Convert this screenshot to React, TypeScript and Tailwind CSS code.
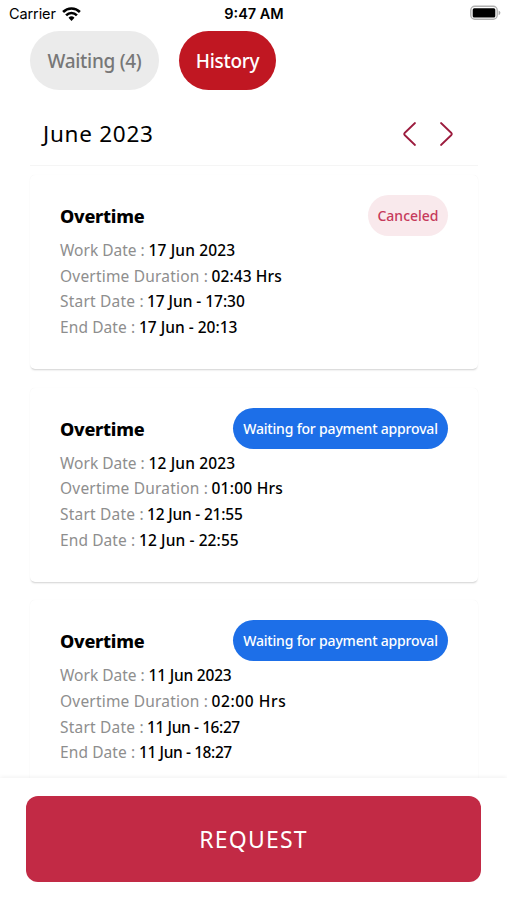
import { clsx } from "clsx";

type Status = "canceled" | "payment";

interface Detail {
  label: string;
  value: string;
  spacing: string;
}

interface OvertimeItem {
  id: number;
  status: Status;
  details: Detail[];
}

const items: OvertimeItem[] = [
  {
    id: 1,
    status: "canceled",
    details: [
      { label: "Work Date :", value: "17 Jun 2023", spacing: "tracking-[0.14px]" },
      { label: "Overtime Duration :", value: "02:43 Hrs", spacing: "tracking-[0.1px]" },
      { label: "Start Date :", value: "17 Jun - 17:30", spacing: "tracking-[-0.05px]" },
      { label: "End Date :", value: "17 Jun - 20:13", spacing: "tracking-normal" },
    ],
  },
  {
    id: 2,
    status: "payment",
    details: [
      { label: "Work Date :", value: "12 Jun 2023", spacing: "tracking-[0.14px]" },
      { label: "Overtime Duration :", value: "01:00 Hrs", spacing: "tracking-[0.25px]" },
      { label: "Start Date :", value: "12 Jun - 21:55", spacing: "tracking-[-0.2px]" },
      { label: "End Date :", value: "12 Jun - 22:55", spacing: "tracking-[0.1px]" },
    ],
  },
  {
    id: 3,
    status: "payment",
    details: [
      { label: "Work Date :", value: "11 Jun 2023", spacing: "tracking-[-0.2px]" },
      { label: "Overtime Duration :", value: "02:00 Hrs", spacing: "tracking-[0.6px]" },
      { label: "Start Date :", value: "11 Jun - 16:27", spacing: "tracking-[-0.4px]" },
      { label: "End Date :", value: "11 Jun - 18:27", spacing: "tracking-[-0.4px]" },
    ],
  },
];

// Every label has a fixed width so the values start at the same place in each card
const labelClass: Record<string, string> = {
  "Work Date :": "w-[88.5px]",
  "Overtime Duration :": "w-[151.5px] tracking-[0.2px]",
  "Start Date :": "w-[87px] tracking-[0.2px]",
  "End Date :": "w-[79px] tracking-[0.1px]",
};

function StatusBar() {
  return (
    <div className="grid h-[31px] shrink-0 grid-cols-3 items-start pt-[5px] pr-[6px] pl-[9px] font-['Inter',sans-serif] text-[14.5px] leading-[18px] text-black">
      <div className="flex items-center gap-[6px]">
        <span className="tracking-[-0.1px]">Carrier</span>
        <svg width="19" height="14" viewBox="0 0 19 14" fill="none" stroke="#000" strokeWidth="2.6">
          <path d="M1.1 5a12 12 0 0 1 16.8 0" />
          <path d="M4.1 8.3a7.6 7.6 0 0 1 10.800 0" />
          <path d="M9.5 14l-3-3.200a4.300 4.300 0 0 1 6 0z" fill="#000" stroke="none" />
        </svg>
      </div>
      <span className="-ml-[2px] text-center font-semibold whitespace-nowrap">9:47 AM</span>
      <svg className="justify-self-end" width="31" height="16" viewBox="0 0 31 16">
        <rect x="0.8" y="1.3" width="26.4" height="13" rx="4" fill="#fff" stroke="#b0b0b0" strokeWidth="1.4" />
        <rect x="2.7" y="3.2" width="22.6" height="9.2" rx="1.5" fill="#000" />
        <path d="M28.6 5.4q1.8 .8 1.8 2.4t-1.8 2.4z" fill="#a8a8a8" />
      </svg>
    </div>
  );
}

function Badge({ status }: { status: Status }) {
  return (
    <div
      className={clsx(
        "flex h-[41px] shrink-0 items-center justify-center rounded-full text-[14px] font-medium whitespace-nowrap",
        status === "canceled"
          ? "w-[80px] bg-[#f9e9ec] text-[#c63a5b]"
          : "w-[215px] bg-[#1d6fe8] tracking-[-0.18px] text-white"
      )}
    >
      {status === "canceled" ? "Canceled" : "Waiting for payment approval"}
    </div>
  );
}

function OvertimeCard({ item }: { item: OvertimeItem }) {
  return (
    <div className="h-[194px] shrink-0 rounded-[5px] bg-white px-[30px] pt-[20px] shadow-[0_2px_2px_-1px_rgba(0,0,0,0.18),0_0_1px_rgba(0,0,0,0.07)]">
      <div className="flex items-center justify-between">
        <h2 className="pt-[2px] text-[18px] font-extrabold tracking-[-0.25px] text-black">Overtime</h2>
        <Badge status={item.status} />
      </div>
      <div className="mt-[2.2px] text-[15.5px] leading-[25.6px] whitespace-nowrap">
        {item.details.map((d) => (
          <div key={d.label} className="flex">
            <span className={clsx("shrink-0 text-[#8e8e8e]", labelClass[d.label])}>{d.label}</span>
            <span className={clsx("font-medium text-black", d.spacing)}>{d.value}</span>
          </div>
        ))}
      </div>
    </div>
  );
}

export default function App() {
  return (
    <div className="flex h-[900px] w-[507px] flex-col overflow-hidden bg-white font-['Noto_Sans',sans-serif]">
      <StatusBar />

      <div className="flex shrink-0 gap-[20px] px-[30px] text-[19px] font-medium tracking-[-0.3px]">
        <button className="h-[59px] w-[129px] rounded-full bg-[#ebebeb] pt-[2px] text-[#777]">Waiting (4)</button>
        <button className="h-[59px] w-[97px] rounded-full bg-[#c01722] pt-[2px] text-white">History</button>
      </div>

      {/* Month picker */}
      <div className="mr-[29px] ml-[30px] mt-[13px] flex h-[63px] shrink-0 items-center justify-between border-b border-[#f5f5f5] pr-[24px] pl-[13px]">
        <h1 className="pb-[1px] text-[22.5px] tracking-[0.75px] text-black">June 2023</h1>
        <div className="flex gap-[22px]">
          <svg width="15" height="26" viewBox="0 0 15 26" fill="none" stroke="#9c1c3e" strokeWidth="1.8" strokeLinecap="round" strokeLinejoin="round">
            <path d="M13 2L2.6 12q-1 1 0 2L13 24" />
          </svg>
          <svg width="15" height="26" viewBox="0 0 15 26" fill="none" stroke="#9c1c3e" strokeWidth="1.8" strokeLinecap="round" strokeLinejoin="round">
            <path d="M2 2l10.400 10q1 1 0 2L2 24" />
          </svg>
        </div>
      </div>

      <div className="flex min-h-0 flex-1 flex-col gap-[18.600px] overflow-hidden pt-[9px] pr-[29px] pl-[30px]">
        {items.map((item) => (
          <OvertimeCard key={item.id} item={item} />
        ))}
      </div>

      <div className="z-10 h-[122px] shrink-0 bg-white px-[26px] pt-[18px] shadow-[0_-1px_4px_rgba(0,0,0,0.06)]">
        <button className="h-[86px] w-full rounded-[12px] bg-[#c22a45] text-[23px] tracking-[1.2px] text-white">REQUEST</button>
      </div>
    </div>
  );
}
